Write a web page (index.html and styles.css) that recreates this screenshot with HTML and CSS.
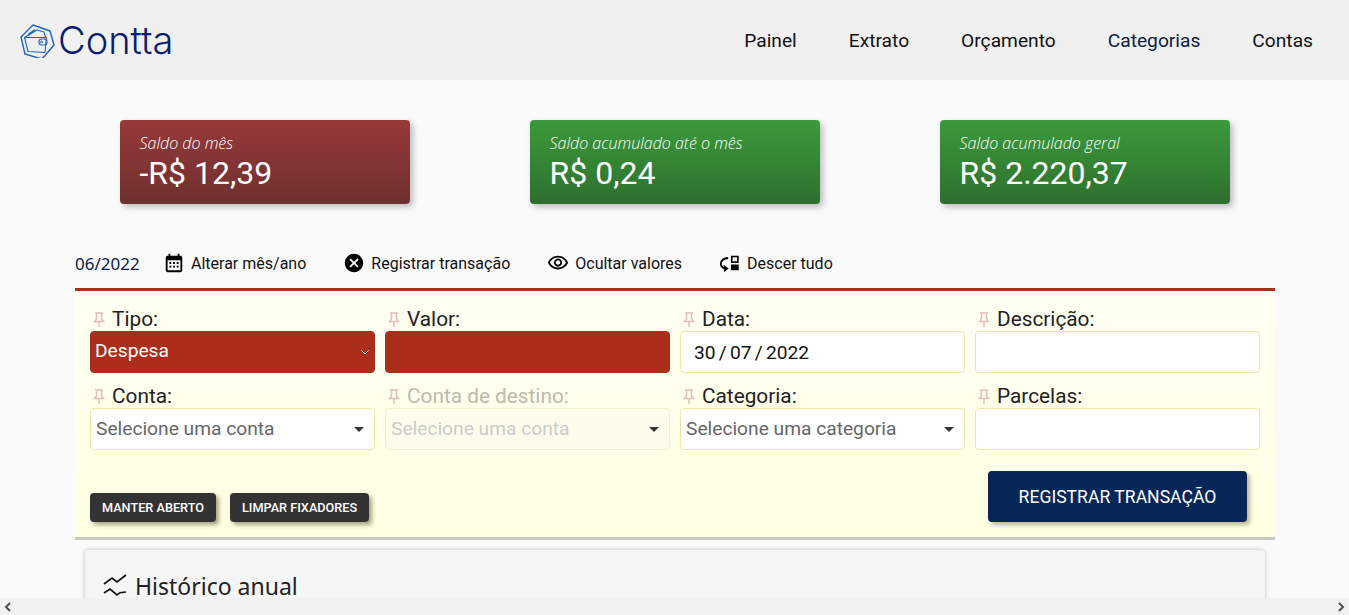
FILE: index.html
```html
<!DOCTYPE html>
<html lang="pt-BR">
<head>
<meta charset="UTF-8">
<meta name="viewport" content="width=device-width, initial-scale=1.0">
<title>Contta</title>
<link rel="stylesheet" href="styles.css">
</head>
<body>
<div class="page">
  <header class="topbar">
    <a class="logo" href="#">
      <svg class="logo-icon" width="36" height="36" viewBox="0 0 36 36" fill="none" stroke="#1f62c0" stroke-width="1.4" stroke-linejoin="round">
        <path d="M13 3 30 9l4 14-12 14-17-5-4-17z"/>
        <path d="M4.500 15.500 8 29.500l17 1 1.500-15z" stroke-width="1.100"/>
        <path d="M4.500 15.500 17 8l7 2 1.500 5.500M8 12.500 15 7.500" stroke-width="1.100"/>
        <rect x="19" y="17" width="8" height="6" rx="2.500" stroke-width="1.100"/>
        <circle cx="21.500" cy="20" r="1" stroke-width="1"/>
      </svg>
      <span class="logo-text">Contta</span>
    </a>
    <nav class="nav">
      <a href="#">Painel</a>
      <a href="#">Extrato</a>
      <a href="#">Orçamento</a>
      <a class="active" href="#">Categorias</a>
      <a href="#">Contas</a>
    </nav>
  </header>

  <main class="content">
    <section class="cards">
      <div class="card card-red">
        <p class="card-label">Saldo do mês</p>
        <p class="card-value">-R$ 12,39</p>
      </div>
      <div class="card card-green">
        <p class="card-label">Saldo acumulado até o mês</p>
        <p class="card-value">R$ 0,24</p>
      </div>
      <div class="card card-green">
        <p class="card-label">Saldo acumulado geral</p>
        <p class="card-value">R$ 2.220,37</p>
      </div>
    </section>

    <section class="toolbar">
      <span class="month">06/2022</span>
      <a class="tool" href="#">
        <svg width="22" height="22" viewBox="0 0 24 24"><path d="M19 4h-1V2h-2v2H8V2H6v2H5a2 2 0 0 0-2 2v14a2 2 0 0 0 2 2h14a2 2 0 0 0 2-2V6a2 2 0 0 0-2-2zm0 16H5V9h14v11zM7 11h2v2H7zm4 0h2v2h-2zm4 0h2v2h-2zM7 15h2v2H7zm4 0h2v2h-2zm4 0h2v2h-2z"/></svg>
        Alterar mês/ano
      </a>
      <a class="tool" href="#">
        <svg width="22" height="22" viewBox="0 0 24 24"><path d="M12 2C6.470 2 2 6.470 2 12s4.470 10 10 10 10-4.470 10-10S17.530 2 12 2zm5 13.590L15.590 17 12 13.410 8.410 17 7 15.590 10.590 12 7 8.410 8.410 7 12 10.590 15.590 7 17 8.410 13.410 12 17 15.590z"/></svg>
        Registrar transação
      </a>
      <a class="tool" href="#">
        <svg width="22" height="22" viewBox="0 0 24 24"><path d="M12 6c3.790 0 7.170 2.130 8.820 5.500C19.170 14.870 15.790 17 12 17s-7.170-2.130-8.820-5.500C4.830 8.130 8.210 6 12 6m0-2C7 4 2.730 7.110 1 11.500 2.730 15.890 7 19 12 19s9.270-3.110 11-7.500C21.270 7.110 17 4 12 4zm0 5c1.380 0 2.500 1.120 2.500 2.500S13.380 14 12 14s-2.500-1.120-2.500-2.500S10.620 9 12 9m0-2c-2.480 0-4.500 2.020-4.500 4.500S9.520 16 12 16s4.500-2.020 4.500-4.500S14.480 7 12 7z"/></svg>
        Ocultar valores
      </a>
      <a class="tool" href="#">
        <svg width="22" height="22" viewBox="0 0 24 24">
          <path d="M13 4h8.500v8H13zm1.800 1.800v4.400h4.900V5.800zM13 13.500h8.500V20H13z"/>
          <path d="M10 6.500C5 6.500 2 9.500 2 12.500c0 3 2 4.800 4.500 5.500" fill="none" stroke="#000" stroke-width="2"/>
          <path d="M5 14l5.500 4-5 4z"/>
        </svg>
        Descer tudo
      </a>
    </section>

    <form class="form-box">
      <div class="form-grid">
        <div class="field">
          <label><svg class="pin" viewBox="0 0 12 16"><path d="M2 1h8M3.500 1v6L1.500 9.500h9L8.500 7V1M6 9.500V15"/></svg>Tipo:</label>
          <div class="select-wrap">
            <select class="control control-red"><option>Despesa</option></select>
            <svg class="chevron" width="8" height="5" viewBox="0 0 8 5"><path d="M.5.5 4 4 7.500.5"/></svg>
          </div>
        </div>
        <div class="field">
          <label><svg class="pin" viewBox="0 0 12 16"><path d="M2 1h8M3.500 1v6L1.500 9.500h9L8.500 7V1M6 9.500V15"/></svg>Valor:</label>
          <input class="control control-red" type="text">
        </div>
        <div class="field">
          <label><svg class="pin" viewBox="0 0 12 16"><path d="M2 1h8M3.500 1v6L1.500 9.500h9L8.500 7V1M6 9.500V15"/></svg>Data:</label>
          <input class="control control-date" type="text" value="30 / 07 / 2022">
        </div>
        <div class="field">
          <label><svg class="pin" viewBox="0 0 12 16"><path d="M2 1h8M3.500 1v6L1.500 9.500h9L8.500 7V1M6 9.500V15"/></svg>Descrição:</label>
          <input class="control" type="text">
        </div>
        <div class="field">
          <label><svg class="pin" viewBox="0 0 12 16"><path d="M2 1h8M3.500 1v6L1.500 9.500h9L8.500 7V1M6 9.500V15"/></svg>Conta:</label>
          <div class="select-wrap">
            <select class="control"><option>Selecione uma conta</option></select>
            <span class="caret"></span>
          </div>
        </div>
        <div class="field disabled">
          <label><svg class="pin" viewBox="0 0 12 16"><path d="M2 1h8M3.500 1v6L1.500 9.500h9L8.500 7V1M6 9.500V15"/></svg><span>Conta de destino:</span></label>
          <div class="select-wrap">
            <select class="control" disabled><option>Selecione uma conta</option></select>
            <span class="caret"></span>
          </div>
        </div>
        <div class="field">
          <label><svg class="pin" viewBox="0 0 12 16"><path d="M2 1h8M3.500 1v6L1.500 9.500h9L8.500 7V1M6 9.500V15"/></svg>Categoria:</label>
          <div class="select-wrap">
            <select class="control"><option>Selecione uma categoria</option></select>
            <span class="caret"></span>
          </div>
        </div>
        <div class="field">
          <label><svg class="pin" viewBox="0 0 12 16"><path d="M2 1h8M3.500 1v6L1.500 9.500h9L8.500 7V1M6 9.500V15"/></svg>Parcelas:</label>
          <input class="control" type="text">
        </div>
      </div>
      <div class="form-actions">
        <div class="small-actions">
          <button class="btn-small" type="button">MANTER ABERTO</button>
          <button class="btn-small" type="button">LIMPAR FIXADORES</button>
        </div>
        <button class="btn-main" type="button">REGISTRAR TRANSAÇÃO</button>
      </div>
    </form>

    <section class="history">
      <h2>
        <svg class="chart-icon" width="24" height="24" viewBox="0 0 24 24"><path d="M1 10 9 4l5 4 9-7M1 19l6-4 7 6 3-2.300 6-.7"/></svg>
        Histórico anual
      </h2>
    </section>
  </main>
</div>

<div class="hscroll">
  <svg width="8" height="10" viewBox="0 0 8 10"><path d="M6 1 2 5l4 4"/></svg>
  <svg width="8" height="10" viewBox="0 0 8 10"><path d="M2 1l4 4-4 4"/></svg>
</div>
</body>
</html>
```

FILE: styles.css
```css
* {
  box-sizing: border-box;
}
html, body {
  height: 100%;
}
body {
  margin: 0;
  display: flex;
  flex-direction: column;
  overflow: hidden;
  background-color: #fafafa;
  font-family: Roboto, Arial, sans-serif;
  color: #111;
}
a {
  color: inherit;
  text-decoration: none;
}
.page {
  flex: 1;
  min-height: 0;
  overflow: hidden;
}

/* Top bar */
.topbar {
  height: 80px;
  background-color: #f0f0f0;
  display: flex;
  align-items: center;
  justify-content: space-between;
  padding: 0 36px 0 20px;
}
.logo {
  display: flex;
  align-items: center;
  gap: 2px;
}
.logo-icon {
  flex: none;
}
.logo-text {
  font-family: Inter, sans-serif;
  font-weight: 300;
  font-size: 38px;
  line-height: 38px;
  color: #0b1d6e;
}
.nav {
  display: flex;
  gap: 52px;
  font-size: 19.200px;
}
.nav .active {
  color: #0a2144;
}

/* Balance cards */
.cards {
  display: flex;
  justify-content: center;
  gap: 120px;
  padding-top: 40px;
}
.card {
  width: 290px;
  height: 84px;
  padding: 13px 20px;
  border-radius: 4px;
  color: #fff;
  box-shadow: 3px 3px 6px rgba(0,0,0,0.25);
}
.card-red {
  background: linear-gradient(#973939, #6f3030);
}
.card-green {
  background: linear-gradient(#3b9a3b, #2e6f2e);
}
.card-label {
  margin: 0;
  font-family: "Open Sans", sans-serif;
  font-weight: 300;
  font-style: italic;
  font-size: 16px;
  line-height: 21px;
}
.card-value {
  margin: 0;
  font-size: 32px;
  line-height: 38px;
}

/* Toolbar */
.toolbar {
  display: flex;
  align-items: center;
  height: 36px;
  margin: 41px 74px 0 75px;
  font-size: 16px;
}
.month {
  font-family: "Noto Sans", sans-serif;
  font-size: 17px;
  color: #0a2144;
  width: 88px;
}
.tool {
  display: flex;
  align-items: center;
  gap: 6px;
  margin-right: 37px;
}
.tool svg {
  flex: none;
}

/* Transaction form */
.form-box {
  height: 252px;
  margin: 7px 74px 0 75px;
  padding: 17px 15px 0;
  background: linear-gradient(#fffff4, #ffffe2);
  border-top: 3px solid #ab2e1a;
  border-bottom: 3px solid #c9c9c0;
}
.form-grid {
  display: grid;
  grid-template-columns: repeat(4, 285px);
  column-gap: 10px;
  row-gap: 12px;
}
.field label {
  display: flex;
  align-items: center;
  height: 23px;
  padding-left: 3px;
  font-size: 20.800px;
  line-height: 23px;
  color: #222;
}
.pin {
  flex: none;
  width: 12px;
  height: 16px;
  margin-right: 7px;
  fill: none;
  stroke: #e2bdbb;
  stroke-width: 1.500;
}
.control {
  display: block;
  width: 100%;
  height: 42px;
  padding: 0 5px;
  border: 1px solid #ece9a4;
  border-radius: 4px;
  background-color: #fff;
  font-family: Roboto, Arial, sans-serif;
  font-size: 19.200px;
  color: #666;
  outline: none;
  appearance: none;
}
select.control {
  padding-bottom: 2px;
}
.control-red {
  background-color: #ab2e1a;
  border-color: #ab2e1a;
  color: #fff;
  padding-left: 4px;
}
select.control-red {
  padding-bottom: 3px;
}
.control-date {
  padding-left: 13px;
  color: #111;
  word-spacing: -1.500px;
}
.select-wrap {
  position: relative;
}
.caret {
  position: absolute;
  right: 11px;
  top: 19px;
  border-left: 5px solid transparent;
  border-right: 5px solid transparent;
  border-top: 5px solid #333;
}
.chevron {
  position: absolute;
  right: 6px;
  top: 19px;
  fill: none;
  stroke: #fff;
  stroke-width: 1;
}
.disabled label span {
  color: #bbbbac;
}
.disabled .control {
  background-color: #fdfdeb;
  border-color: #f3f1c9;
  color: #ccc;
  opacity: 1;
}

.form-actions {
  display: flex;
  align-items: flex-end;
  justify-content: space-between;
  padding: 21px 13px 0 0;
}
.small-actions {
  display: flex;
  gap: 14px;
}
.btn-small {
  height: 29px;
  padding: 0 12px;
  border: none;
  border-radius: 4px;
  background-color: #333;
  color: #fff;
  font-family: Roboto, Arial, sans-serif;
  font-size: 12.700px;
  font-weight: 500;
  box-shadow: 3px 3px 4px rgba(80,80,40,0.5);
}
.btn-main {
  width: 259px;
  height: 51px;
  border: none;
  border-radius: 4px;
  background-color: #062757;
  color: #fff;
  font-family: Roboto, Arial, sans-serif;
  font-size: 17.600px;
  box-shadow: 3px 3px 4px rgba(80,80,40,0.4);
}

/* History card */
.history {
  margin: 10px 84px 0 85px;
  height: 100px;
  padding: 20px 18px;
  background-color: #f5f5f5;
  border-radius: 4px;
  box-shadow: 0 0 4px rgba(0,0,0,0.25);
}
.history h2 {
  display: flex;
  align-items: center;
  gap: 8px;
  margin: 0;
  font-family: "Noto Sans", sans-serif;
  font-size: 23px;
  font-weight: 400;
  line-height: 32px;
  color: #222;
}
.chart-icon {
  fill: none;
  stroke: #111;
  stroke-width: 1.700;
}

/* Bottom scrollbar */
.hscroll {
  flex: none;
  height: 17px;
  display: flex;
  align-items: center;
  justify-content: space-between;
  padding: 0 4px;
  background-color: #f1f1f1;
}
.hscroll svg {
  fill: none;
  stroke: #505050;
  stroke-width: 2;
}
```
